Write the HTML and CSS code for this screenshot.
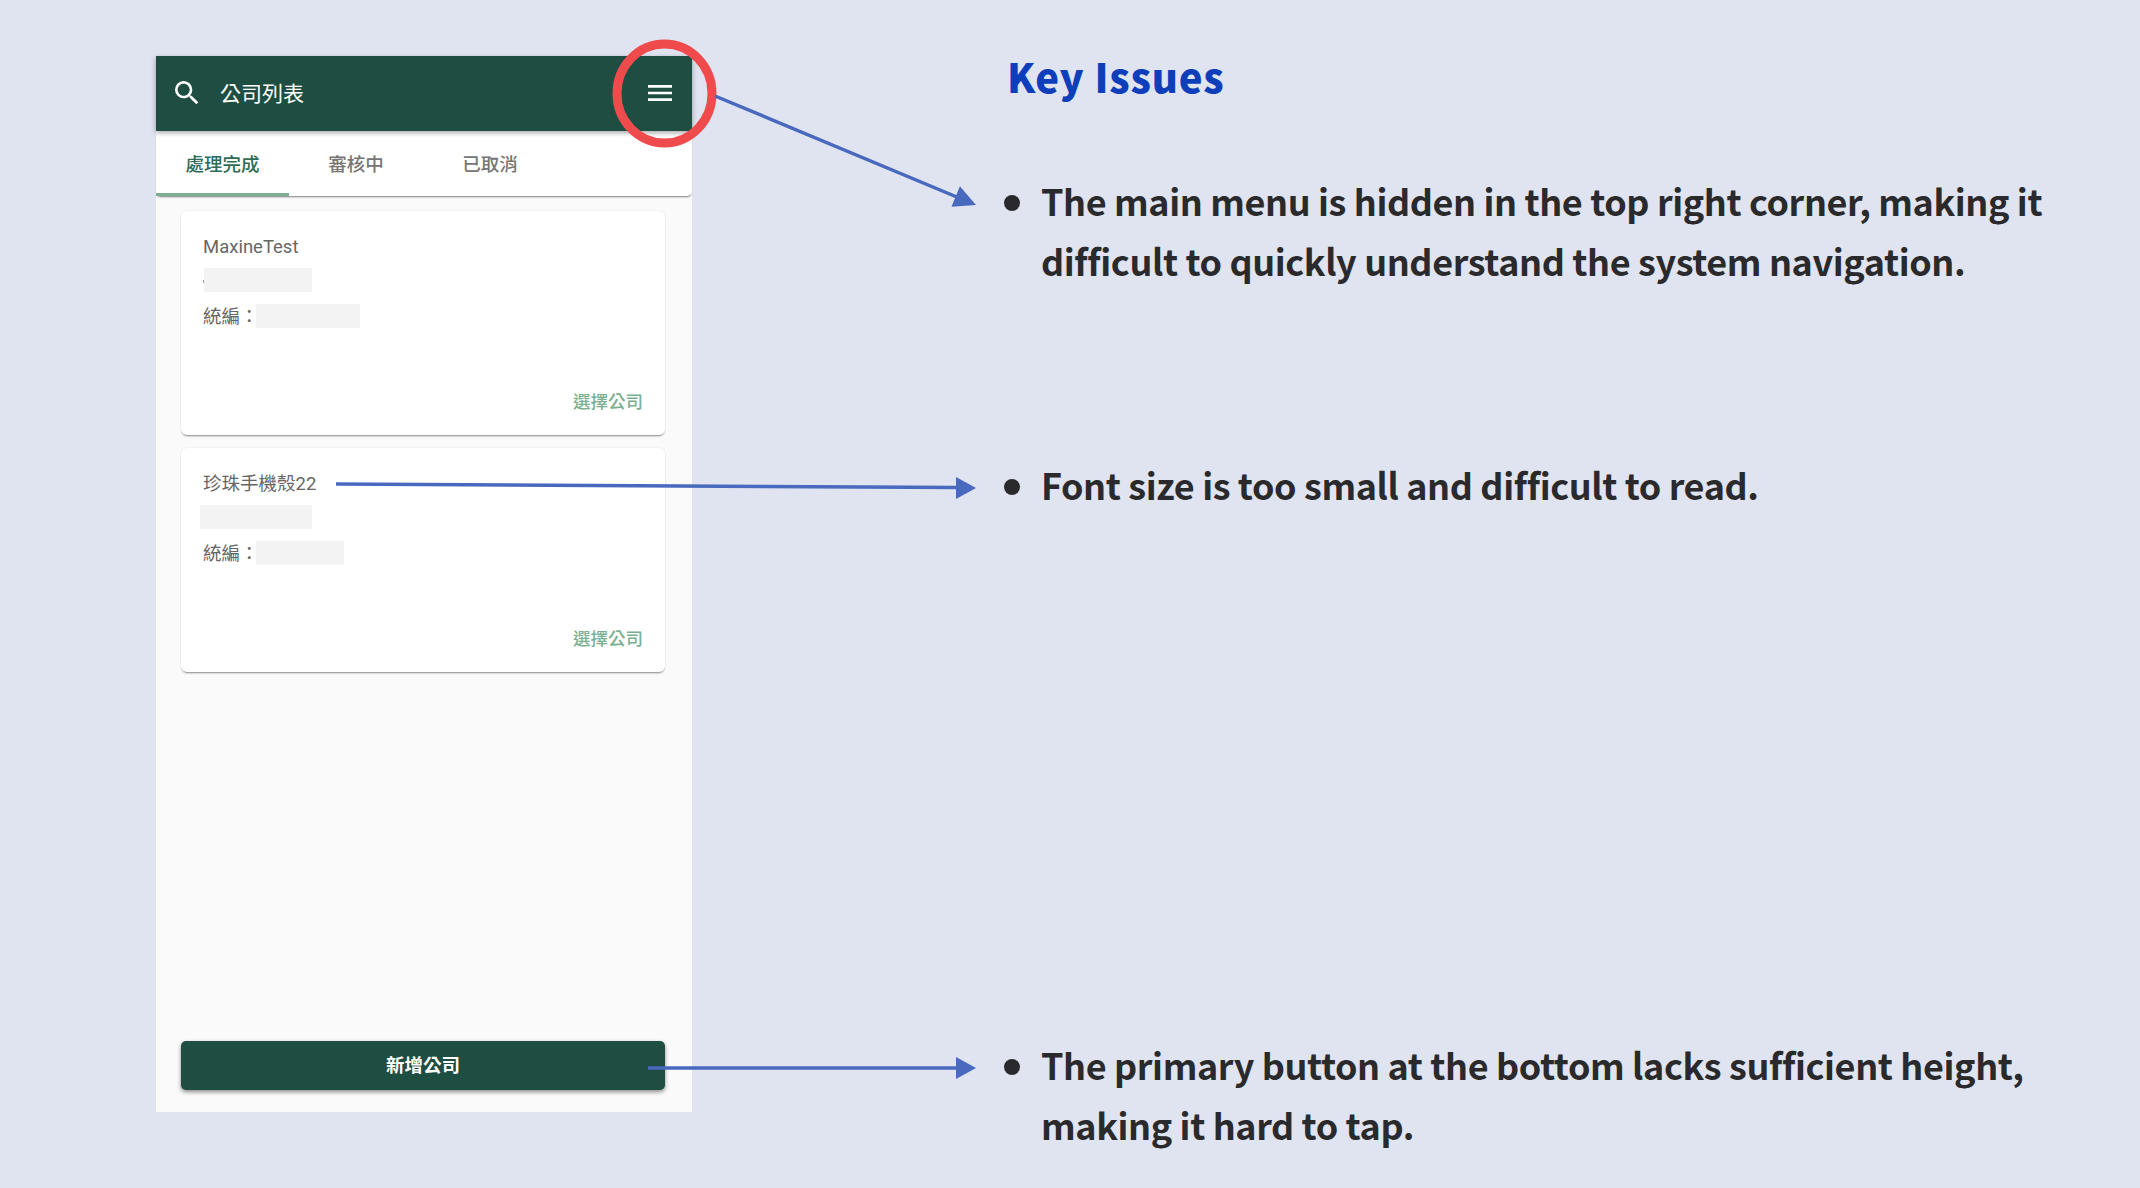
FILE: index.html
```html
<!DOCTYPE html>
<html lang="en">
<head>
    <meta charset="UTF-8">
    <title>Key Issues</title>
    <link rel="stylesheet" href="styles.css">
</head>
<body>
    <div class="slide">
        <div class="phone">
            <header class="appbar">
                <svg class="icon" viewBox="0 0 24 24"><path d="M15.5 14h-.79l-.28-.27A6.47 6.47 0 0 0 16 9.5 6.5 6.5 0 1 0 9.5 16c1.61 0 3.09-.59 4.23-1.57l.27.28v.79l5 4.99L20.49 19l-4.99-5zm-6 0C7.01 14 5 11.99 5 9.5S7.01 5 9.5 5 14 7.01 14 9.5 11.99 14 9.5 14z"/></svg>
                <span class="appbar-title">公司列表</span>
                <svg class="icon menu-icon" viewBox="0 0 24 24"><path d="M3 18h18v-2H3v2zm0-5h18v-2H3v2zm0-7v2h18V6H3z"/></svg>
            </header>
            <nav class="tabs">
                <div class="tab active">處理完成</div>
                <div class="tab">審核中</div>
                <div class="tab">已取消</div>
            </nav>
            <div class="card-list">
                <div class="card">
                    <div class="card-name">MaxineTest</div>
                    <div class="blank blank-name"></div>
                    <div class="card-row">統編：<span class="blank blank-id"></span></div>
                    <div class="card-link">選擇公司</div>
                </div>
                <div class="card">
                    <div class="card-name">珍珠手機殼22</div>
                    <div class="blank blank-name-alt"></div>
                    <div class="card-row">統編：<span class="blank blank-id-alt"></span></div>
                    <div class="card-link">選擇公司</div>
                </div>
            </div>
            <button class="add-btn">新增公司</button>
        </div>

        <div class="notes">
            <h1 class="notes-title">Key Issues</h1>
            <ul class="issues">
                <li class="issue issue-menu"><span class="bullet"></span><span>The main menu is hidden in the top right corner, making it<br>difficult to quickly understand the system navigation.</span></li>
                <li class="issue issue-font"><span class="bullet"></span><span>Font size is too small and difficult to read.</span></li>
                <li class="issue issue-button"><span class="bullet"></span><span>The primary button at the bottom lacks sufficient height,<br>making it hard to tap.</span></li>
            </ul>
        </div>

        <svg class="annotations" viewBox="0 0 2140 1188">
            <ellipse class="ring" cx="664.5" cy="93.5" rx="47.5" ry="49.5"/>
            <line class="arrow-line" x1="715" y1="96" x2="958" y2="197.5"/>
            <polygon class="arrow-head" points="976,205 951.5,206.7 959.9,186.3"/>
            <line class="arrow-line" x1="336" y1="484" x2="958" y2="487.5"/>
            <polygon class="arrow-head" points="976,488 956,477 956,499"/>
            <line class="arrow-line" x1="648" y1="1068" x2="958" y2="1068"/>
            <polygon class="arrow-head" points="976,1068 956,1057 956,1079"/>
        </svg>
    </div>
</body>
</html>
```

FILE: styles.css
```css
* {
    box-sizing: border-box;
}

body {
    margin: 0;
    background-color: #e0e4f0;
    font-family: "Noto Sans CJK TC", sans-serif;
}

.slide {
    position: relative;
    display: flex;
    height: 1188px;
    padding: 56px 0 0 156px;
    overflow: hidden;
}

.phone {
    display: flex;
    flex-direction: column;
    width: 536px;
    height: 1056px;
    background-color: #fafafa;
    font-family: Roboto, "Noto Sans CJK TC", sans-serif;
}

.appbar {
    display: flex;
    align-items: center;
    height: 75px;
    padding: 0 16px 2px 15px;
    background-color: #1e4d41;
    color: #fff;
    box-shadow: 0 2px 5px rgba(0, 0, 0, 0.35);
    position: relative;
}

.icon {
    width: 32px;
    height: 32px;
    fill: #fff;
}

.appbar-title {
    margin: 0 0 2px 17px;
    font-size: 21px;
}

.menu-icon {
    margin-left: auto;
}

.tabs {
    display: flex;
    height: 65px;
    background-color: #fff;
    border-radius: 0 0 5px 5px;
    box-shadow: 0 2px 2px -1px rgba(0, 0, 0, 0.5);
}

.tab {
    width: 134px;
    padding-top: 22px;
    text-align: center;
    font-size: 18.5px;
    line-height: 24px;
    font-weight: 500;
    color: #757575;
}

.tab.active {
    width: 133px;
    color: #2f6b57;
    border-bottom: 3px solid #7ab08f;
}

.card-list {
    display: flex;
    flex-direction: column;
    gap: 13px;
    padding: 15px 27px 0 25px;
}

.card {
    display: flex;
    flex-direction: column;
    height: 224px;
    padding: 24px 22px 21px;
    background-color: #fff;
    border-radius: 6px;
    box-shadow: 0 2px 2px -1px rgba(0, 0, 0, 0.45), 0 0 2px rgba(0, 0, 0, 0.1);
    color: #666;
    font-size: 18.5px;
    line-height: 24px;
}

.blank {
    display: block;
    height: 24px;
    background-color: #f3f3f3;
}

.blank-name {
    position: relative;
    width: 108px;
    margin: 9px 0 12px 1px;
}

.blank-name::before {
    content: "";
    position: absolute;
    top: 12px;
    left: -1px;
    width: 1px;
    height: 3px;
    background-color: #999;
}

.blank-name-alt {
    width: 112px;
    margin: 9px 0 12px -3px;
}

.card-row {
    display: flex;
    line-height: 26px;
}

.blank-id {
    width: 104px;
    margin-left: -3px;
}

.blank-id-alt {
    width: 88px;
    margin-left: -3px;
}

.card-link {
    margin-top: auto;
    text-align: right;
    font-size: 17.5px;
    font-weight: 500;
    color: #7ab08f;
}

.add-btn {
    display: block;
    width: 484px;
    height: 49px;
    margin: auto 0 22px 25px;
    padding: 0 0 3px;
    border: 0;
    border-radius: 5px;
    background-color: #1e4d41;
    color: #fff;
    font-family: inherit;
    font-size: 18.5px;
    font-weight: 700;
    box-shadow: 0 2px 4px rgba(0, 0, 0, 0.45);
}

.notes {
    margin-left: 312px;
    color: #2a2a2c;
}

.notes-title {
    margin: -4px 0 0 3px;
    font-size: 40px;
    line-height: 48px;
    font-weight: 900;
    letter-spacing: 0.8px;
    color: #0f3ebb;
}

.issues {
    margin: 0;
    padding: 0;
    list-style: none;
}

.issue {
    display: flex;
    gap: 21px;
    font-size: 36px;
    line-height: 60px;
    font-weight: 700;
    letter-spacing: -0.4px;
    white-space: nowrap;
}

.issue-menu {
    margin-top: 70px;
}

.issue-font {
    margin-top: 164px;
}

.issue-button {
    margin-top: 520px;
}

.bullet {
    flex: none;
    width: 16px;
    height: 16px;
    margin-top: 25px;
    border-radius: 50%;
    background-color: #2a2a2c;
}

.annotations {
    position: absolute;
    top: 0;
    left: 0;
    width: 2140px;
    height: 1188px;
    pointer-events: none;
}

.ring {
    fill: none;
    stroke: #ef4b4d;
    stroke-width: 9;
}

.arrow-line {
    stroke: #4869bd;
    stroke-width: 3.5;
}

.arrow-head {
    fill: #4869bd;
}
```
